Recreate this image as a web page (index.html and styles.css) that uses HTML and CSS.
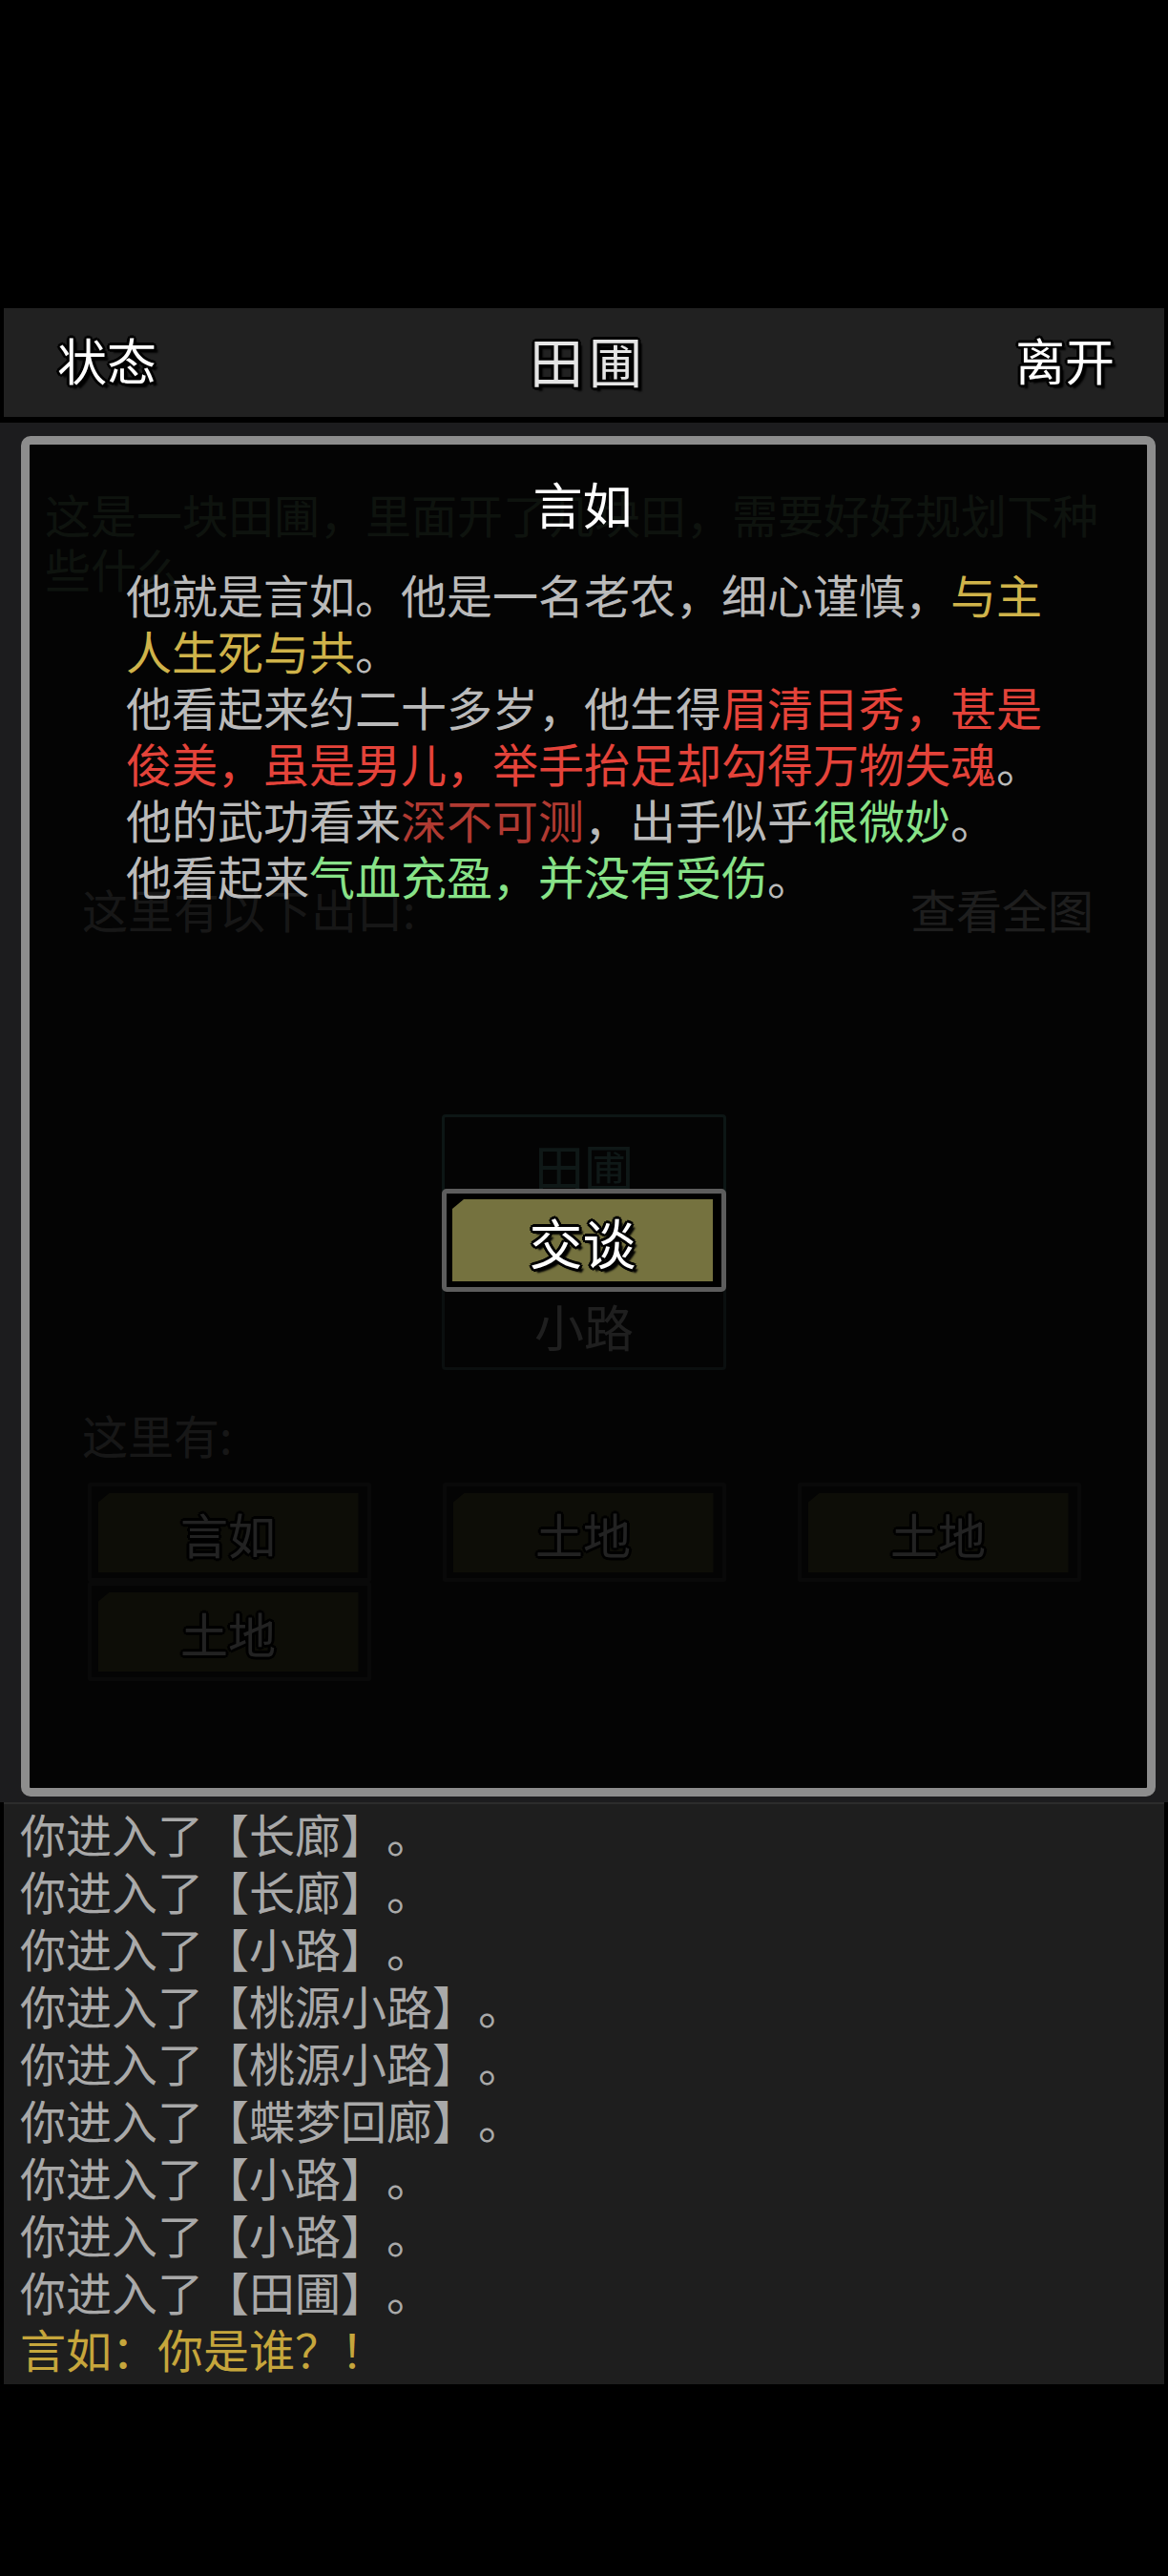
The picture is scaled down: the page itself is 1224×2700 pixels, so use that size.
FILE: index.html
```html
<!DOCTYPE html>
<html lang="zh-CN">
<head>
<meta charset="utf-8">
<title>田圃</title>
<link rel="stylesheet" href="styles.css">
</head>
<body>
<div class="app">
  <header class="topbar">
    <span class="tb-btn">状态</span>
    <span class="tb-title">田圃</span>
    <span class="tb-btn">离开</span>
  </header>

  <main class="main">
    <section class="scene">
      <p class="room-desc">这是一块田圃，里面开了几块田，需要好好规划下种些什么</p>
      <div class="exits-head">
        <span>这里有以下出口:</span>
        <span class="map-link">查看全图</span>
      </div>
      <div class="map">
        <div class="map-cell current">田圃</div>
        <div class="map-cell">小路</div>
      </div>
      <p class="here">这里有:</p>
      <div class="ents">
        <div class="ent"><div class="ent-btn">言如</div></div>
        <div class="ent"><div class="ent-btn">土地</div></div>
        <div class="ent"><div class="ent-btn">土地</div></div>
        <div class="ent"><div class="ent-btn">土地</div></div>
      </div>
    </section>

    <div class="dialog">
      <h2 class="dlg-title">言如</h2>
      <div class="dlg-desc">
        <p>他就是言如。他是一名老农，细心谨慎，<span class="c-gold">与主人生死与共</span>。</p>
        <p>他看起来约二十多岁，他生得<span class="c-red">眉清目秀，甚是俊美，虽是男儿，举手抬足却勾得万物失魂</span>。</p>
        <p>他的武功看来<span class="c-dred">深不可测</span>，出手似乎<span class="c-green">很微妙</span>。</p>
        <p>他看起来<span class="c-green">气血充盈，并没有受伤</span>。</p>
      </div>
      <div class="actions">
        <div class="act"><div class="act-btn">交谈</div></div>
      </div>
    </div>
  </main>

  <section class="log">
    <p>你进入了【长廊】。</p>
    <p>你进入了【长廊】。</p>
    <p>你进入了【小路】。</p>
    <p>你进入了【桃源小路】。</p>
    <p>你进入了【桃源小路】。</p>
    <p>你进入了【蝶梦回廊】。</p>
    <p>你进入了【小路】。</p>
    <p>你进入了【小路】。</p>
    <p>你进入了【田圃】。</p>
    <p class="say">言如：你是谁？！</p>
  </section>
</div>
</body>
</html>
```

FILE: styles.css
```css
* { box-sizing: border-box; }

html, body {
  margin: 0;
  padding: 0;
  background: #000;
}

body {
  font-family: "Noto Sans CJK SC", "Noto Sans", sans-serif;
  color: #bdbdbd;
  text-spacing-trim: space-all;
}

p, h2 { margin: 0; }

.app {
  width: 1224px;
  padding-top: 323px;
}

/* ---------- top bar ---------- */
.topbar {
  height: 114px;
  margin: 0 4px;
  background: #212121;
  display: flex;
  align-items: center;
  justify-content: space-between;
  padding: 0 52px 6px 56px;
}

.tb-btn,
.tb-title {
  font-size: 52px;
  line-height: 60px;
  color: #fff;
  text-shadow:
    3px 0 0 #000, -3px 0 0 #000, 0 3px 0 #000, 0 -3px 0 #000,
    2px 2px 0 #000, -2px -2px 0 #000, 2px -2px 0 #000, -2px 2px 0 #000,
    4px 4px 2px #000;
}

.tb-title {
  font-size: 56px;
  color: #e4e4e4;
  letter-spacing: 6px;
  margin-left: 6px;
}

/* ---------- main scene ---------- */
.main {
  position: relative;
  height: 1452px;
  background: #1c1c1e;
  border-top: 6px solid #000;
}

.scene {
  padding-top: 67px;
}

.room-desc {
  margin-left: 47px;
  width: 1110px;
  font-size: 48px;
  line-height: 57px;
  color: #668466;
}

.exits-head {
  margin: 300px 78px 0 86px;
  display: flex;
  justify-content: space-between;
  font-size: 48px;
  line-height: 57px;
  color: #a4a4a4;
}

.map-link { color: #d4d4d4; }

.map {
  margin-top: 187px;
  display: flex;
  flex-direction: column;
  align-items: center;
  gap: 68px;
}

.map-cell {
  width: 298px;
  height: 100px;
  border: 3px solid #4f6a68;
  border-radius: 4px;
  display: flex;
  align-items: center;
  justify-content: center;
  padding-top: 6px;
  font-size: 52px;
  color: #d8d8d8;
}

.map-cell.current {
  border-color: #5e9a96;
  color: #6aa8a0;
}

.here {
  margin: 39px 0 0 86px;
  font-size: 48px;
  line-height: 57px;
  color: #a4a4a4;
}

.ents {
  margin-top: 22px;
  display: grid;
  grid-template-columns: repeat(3, 297px);
  column-gap: 75px;
  justify-content: center;
}

.ent {
  height: 104px;
  border: 4px solid #444;
  border-radius: 3px;
  padding: 7px 9px 6px 7px;
}

.ent-btn {
  height: 100%;
  background: #5c5a33;
  clip-path: polygon(12px 0, 100% 0, 100% 100%, 0 100%, 0 10px);
  display: flex;
  align-items: center;
  justify-content: center;
  font-size: 50px;
  color: #f0f0f0;
  text-shadow:
    3px 0 0 #000, -3px 0 0 #000, 0 3px 0 #000, 0 -3px 0 #000,
    2px 2px 0 #000, -2px -2px 0 #000, 2px -2px 0 #000, -2px 2px 0 #000;
}

/* ---------- dialog ---------- */
.dialog {
  position: absolute;
  top: 14px;
  left: 22px;
  right: 13px;
  bottom: 6px;
  border: 9px solid #8d8d8d;
  border-radius: 10px;
  background: rgba(0, 0, 0, 0.86);
  padding-top: 32px;
}

.dlg-title {
  font-size: 52px;
  line-height: 60px;
  font-weight: 400;
  color: #fff;
  text-align: center;
  padding-right: 12px;
}

.dlg-desc {
  margin: 35px 0 0 101px;
  width: 980px;
  font-size: 48px;
  line-height: 59px;
  color: #bababa;
}

.c-gold  { color: #cfb34a; }
.c-red   { color: #e4433a; }
.c-dred  { color: #b03a32; }
.c-green { color: #88e288; }

.actions {
  margin-top: 299px;
  display: flex;
  justify-content: center;
  padding-right: 9px;
}

.act {
  width: 298px;
  height: 108px;
  border: 5px solid #5d5d5d;
  border-radius: 5px;
  background: #000;
  padding: 6px 9px 6px 6px;
}

.act-btn {
  height: 100%;
  background: #75723f;
  clip-path: polygon(12px 0, 100% 0, 100% 100%, 0 100%, 0 10px);
  display: flex;
  align-items: center;
  justify-content: center;
  font-size: 56px;
  color: #fff;
  text-shadow:
    3px 0 0 #000, -3px 0 0 #000, 0 3px 0 #000, 0 -3px 0 #000,
    2px 2px 0 #000, -2px -2px 0 #000, 2px -2px 0 #000, -2px 2px 0 #000,
    4px 4px 2px #000;
}

/* ---------- log ---------- */
.log {
  height: 610px;
  margin: 0 4px;
  background: #1e1e1e;
  border-top: 2px solid #2c2c2c;
  padding: 0 17px;
  font-size: 48px;
  line-height: 60px;
  color: #a9a9a9;
}

.log .say { color: #c6a63c; }
```
